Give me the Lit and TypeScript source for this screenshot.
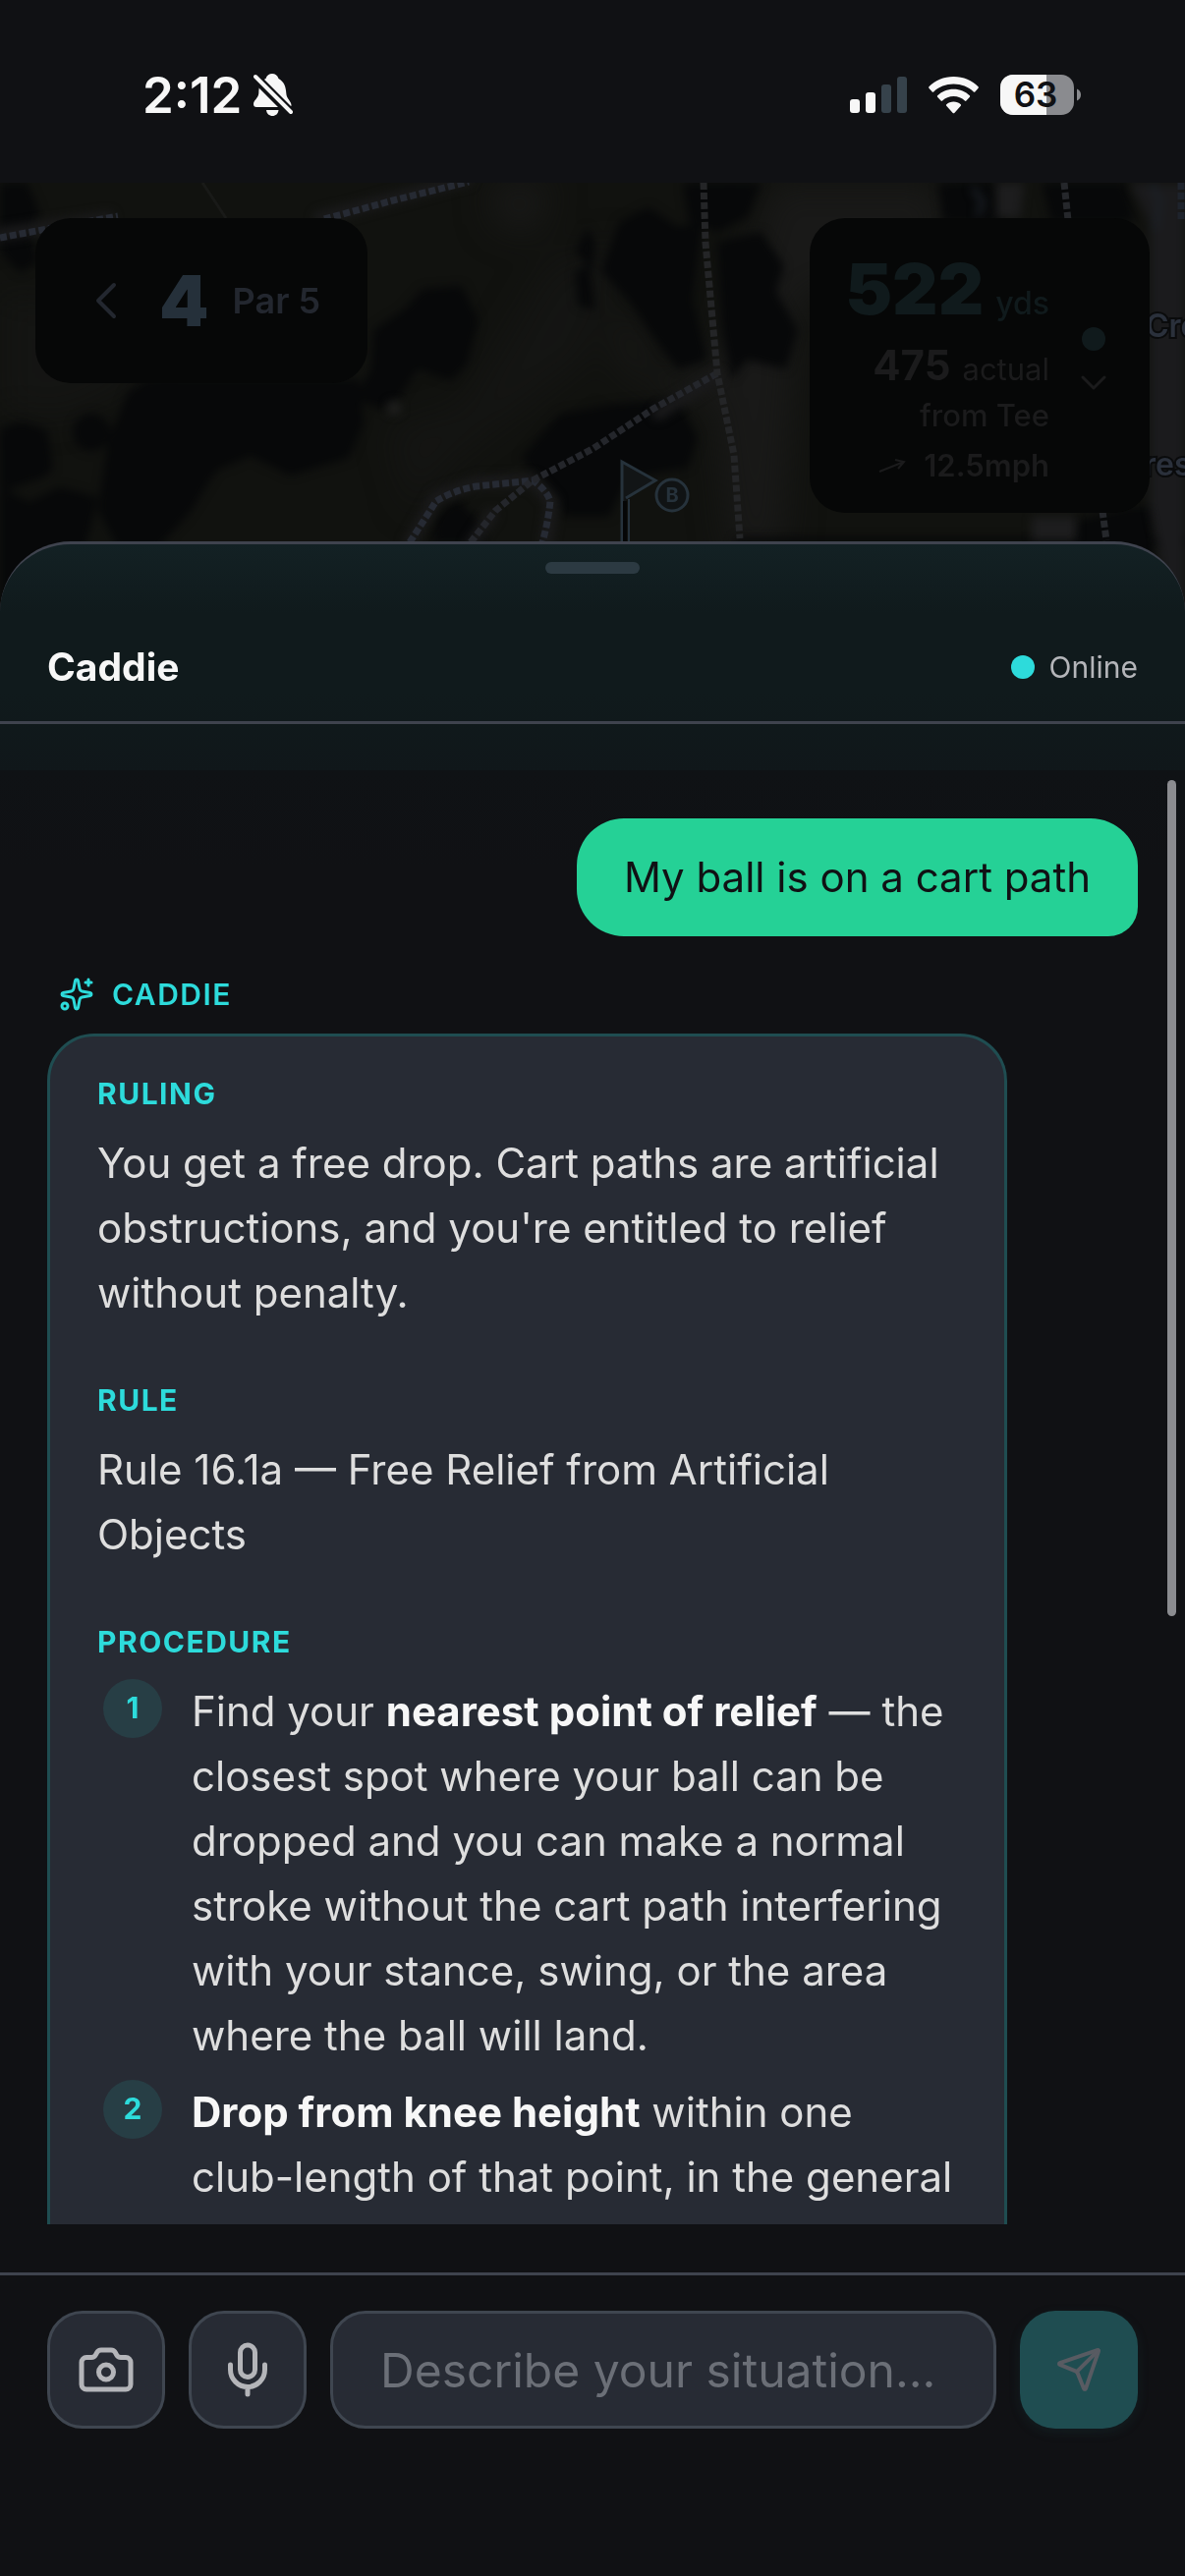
import { LitElement, html, css, svg, nothing } from "lit";
import { customElement, state } from "lit/decorators.js";

const sparkles = svg`
  <path d="M11.017 2.814a1 1 0 0 1 1.966 0l1.051 5.558a2 2 0 0 0 1.594 1.594l5.558 1.051a1 1 0 0 1 0 1.966l-5.558 1.051a2 2 0 0 0-1.594 1.594l-1.051 5.558a1 1 0 0 1-1.966 0l-1.051-5.558a2 2 0 0 0-1.594-1.594l-5.558-1.051a1 1 0 0 1 0-1.966l5.558-1.051a2 2 0 0 0 1.594-1.594z"/>
  <path d="M20 2v4M22 4h-4"/><circle cx="4" cy="20" r="2"/>`;
const camera = svg`
  <path d="M13.997 4a2 2 0 0 1 1.76 1.05l.486.9A2 2 0 0 0 18.003 7H20a2 2 0 0 1 2 2v9a2 2 0 0 1-2 2H4a2 2 0 0 1-2-2V9a2 2 0 0 1 2-2h1.997a2 2 0 0 0 1.759-1.048l.489-.904A2 2 0 0 1 10.004 4z"/>
  <circle cx="12" cy="13" r="3"/>`;
const mic = svg`<path d="M12 19v3M19 10v2a7 7 0 0 1-14 0v-2"/><rect x="9" y="2" width="6" height="13" rx="3"/>`;
const send = svg`
  <path d="M14.536 21.686a.5.5 0 0 0 .937-.024l6.5-19a.496.496 0 0 0-.635-.635l-19 6.5a.5.5 0 0 0-.024.937l7.93 3.18a2 2 0 0 1 1.112 1.11z"/>
  <path d="m21.854 2.147-10.94 10.939"/>`;

const icon = (shape: unknown, size: number) => html`
  <svg width=${size} height=${size} viewBox="0 0 24 24" fill="none" stroke="currentColor"
    stroke-width="2" stroke-linecap="round" stroke-linejoin="round" aria-hidden="true">${shape}</svg>`;

@customElement("phone-status")
class PhoneStatus extends LitElement {
  static styles = css`
    :host { display: flex; align-items: flex-start; justify-content: space-between; height: 186px; box-sizing: border-box;
      padding: 67px 106px 0 145px; background: #101114; color: #f7f7f7; }
    .left, .right { display: flex; align-items: center; height: 60px; }
    .left { gap: 12px; }
    .right { gap: 22px; }
    .time { font-size: 51px; line-height: 60px; font-weight: 600; }
    .battery { font-size: 35px; font-weight: 600; }
  `;
  render() {
    return html`
      <div class="left">
        <span class="time">2:12</span>
        <svg width="40" height="44" viewBox="0 0 40 44" aria-hidden="true">
          <path fill="#f7f7f7" d="M19 0c3 0 5.400 1.800 6.500 5C31 8 33 13 33.300 20c.3 5.500 5.200 8 5.200 12 0 1.500-1 2-2.500 2H3c-2 0-3-1-3-3 0-4 5-6 5.300-11C5.500 12 7 7.500 12.500 5 13.500 1.800 16 0 19 0z"/>
          <path fill="#f7f7f7" d="M13 37h12.500c-.3 3.800-3 6-6.200 6s-6-2.200-6.300-6z"/>
          <path stroke="#101114" stroke-width="10" d="M0 2 L40 42"/>
          <path stroke="#f7f7f7" stroke-width="4" stroke-linecap="round" d="M2 3 L38 39"/>
        </svg>
      </div>
      <div class="right">
        <svg width="58" height="38" viewBox="0 0 58 38" aria-hidden="true">
          <g fill="#f7f7f7"><rect y="23" width="10" height="14" rx="3"/><rect x="16" y="16" width="10" height="21" rx="3"/></g>
          <g fill="#36424b"><rect x="32" y="8" width="10" height="29" rx="3"/><rect x="48" y="0" width="10" height="37" rx="3"/></g>
        </svg>
        <svg width="51" height="38" viewBox="0 0 51 38" fill="#f7f7f7" aria-hidden="true">
          <path d="M25.500 0C35.500 0 44.500 4 50.600 10.200c.4.500.4 1 0 1.500l-3.300 3.700c-.5.500-1 .5-1.500 0C40.500 10.400 33.400 7.600 25.500 7.600S10.500 10.400 5.200 15.400c-.5.500-1 .5-1.500 0L.4 11.700c-.4-.5-.4-1 0-1.500C6.500 4 15.500 0 25.500 0z"/>
          <path d="M25.500 12.700c6.400 0 12.200 2.500 16.400 6.600.4.400.4 1 0 1.400l-3.500 3.900c-.5.500-1 .5-1.500 0-3-2.800-7-4.500-11.400-4.500s-8.400 1.700-11.400 4.500c-.5.500-1 .5-1.500 0l-3.500-3.900c-.4-.4-.4-1 0-1.400 4.200-4.100 10-6.600 16.400-6.600z"/>
          <path d="M25.500 25.500c2.800 0 5.300 1 7.200 2.700.5.400.5 1 .1 1.500l-6.500 7.200c-.5.500-1.100.5-1.600 0l-6.500-7.200c-.4-.5-.4-1.100.1-1.500 1.900-1.700 4.400-2.700 7.200-2.700z"/>
        </svg>
        <svg class="battery" width="82" height="42" viewBox="0 0 82 42" role="img" aria-label="Battery 63">
          <defs><clipPath id="cell"><rect width="75" height="41" rx="13"/></clipPath></defs>
          <g clip-path="url(#cell)"><rect width="75" height="41" fill="#8a8b8f"/><rect width="47" height="41" fill="#f7f7f7"/></g>
          <path d="M78 14.500c2.500 1 4 3.200 4 6s-1.500 5-4 6z" fill="#8a8b8f"/>
          <text x="36" y="33" text-anchor="middle" fill="#101114">63</text>
        </svg>
      </div>`;
  }
}

@customElement("course-map")
class CourseMap extends LitElement {
  static styles = css`
    :host { display: block; position: relative; height: 437px; background: #11120f; }
    .terrain { position: absolute; inset: 0; width: 100%; height: 100%; }
    .cards { position: relative; display: flex; justify-content: space-between; align-items: flex-start; padding: 36px; }
    .card { background: #060707; border-radius: 36px; box-sizing: border-box; }
    .hole { display: flex; align-items: center; height: 168px; width: 338px; padding-left: 60px; }
    .back { border: 0; padding: 0; background: none; color: #23272f; display: flex; width: 48px; }
    .number { font-size: 72px; line-height: 72px; font-weight: 900; color: #25303a; margin: 0 24px 0 18px; }
    .par { font-size: 36px; line-height: 48px; font-weight: 600; color: #23272f; }
    .yardage { display: flex; align-items: flex-start; gap: 33px; height: 300px; padding: 36px 45px 24px 36px; color: #1b1b1c; }
    .lines { display: flex; flex-direction: column; align-items: flex-end; font-size: 31px; line-height: 42px; font-weight: 500; }
    .plays { display: flex; align-items: baseline; gap: 12px; color: #101a1c; font-size: 32px; line-height: 36px; margin-bottom: 12px; }
    .plays strong { font-size: 72px; line-height: 72px; font-weight: 900; }
    .actual { display: flex; align-items: baseline; gap: 12px; font-weight: 400; }
    .actual strong { font-size: 42px; line-height: 60px; font-weight: 700; }
    .wind { display: flex; align-items: center; gap: 18px; margin-top: 9px; font-weight: 600; }
    .side { display: flex; flex-direction: column; align-items: center; gap: 25px; width: 24px; padding-top: 75px; }
    .dot { width: 24px; height: 24px; border-radius: 50%; background: #101a1c; }
    .label { font-size: 32px; font-weight: 600; fill: #2a303b; stroke: #0a0b0c; stroke-width: 4px; paint-order: stroke; }
    .tee { font-size: 20px; font-weight: 700; fill: #26323b; }
  `;
  render() {
    return html`
      <svg class="terrain" viewBox="0 0 1206 437" preserveAspectRatio="xMidYMin slice" aria-hidden="true">
        <defs>
          <filter id="soft" x="-10%" y="-10%" width="120%" height="120%" color-interpolation-filters="sRGB"><feGaussianBlur stdDeviation="5"/></filter>
          <filter id="wide" x="-20%" y="-20%" width="140%" height="140%" color-interpolation-filters="sRGB"><feGaussianBlur stdDeviation="18"/></filter>
        </defs>
        <g filter="url(#wide)" fill="#191918">
          <path d="M395 250 420 340 450 290 600 180 640 60 560 80 470 230z" opacity=".4"/>
          <path d="M500 0h60l-15 50-40-8z"/><path d="M785 0h170l10 60-150 60-20 260h-50l-20-170z"/>
          <path d="M625 140l15 60 20 0-10-60zM660 200l70-20 30 40 20 140h-20l-20-140-60 0z"/>
          <path d="M0 110 60 120 150 200 60 240 0 230z" opacity=".4"/>
        </g>
        <g filter="url(#soft)" fill="#070809">
          <path d="M0 0h28l12 30-10 20 10 30-20 12L0 70z"/>
          <path d="M0 250 22 243 48 252 54 290 45 300 0 315z"/><circle cx="93" cy="254" r="19"/>
          <path d="M150 200h215l5 45-15 35-60 18-40-20-35 15-25 40-35 40-40 0-20-40 10-70 20-50z"/>
          <path d="M0 310 30 325 60 310 100 320 90 360 60 437H0z"/>
          <path d="M410 130 430 108 470 105 487 140 475 185 460 202 425 190 405 220 390 230 360 220 378 190 380 150z"/>
          <path d="M585 70 597 45 606 60 603 90z"/><path d="M585 90 600 84 606 130 588 125z"/>
          <path d="M530 280 570 235 625 225 690 220 710 260 700 290 640 300 620 340H575l-12-25-20-20z"/>
          <path d="M445 340l20-18 25 25 5 20h-55z"/>
          <path d="M630 40 660 25 690 45 715 40 705 120 720 180 690 190 660 150 640 120 612 90z"/>
          <path d="M695 0h80l-14 35-30 15-30-10z"/><path d="M730 60 775 50 798 85 790 110 812 150 800 190 760 180 745 200 735 150z"/>
          <path d="M955 0h60l5 40h-60zM1060 0h85l10 40h-85z"/><path d="M1150 330h24l-2 70-20 30h-110l0-30 50-10 0-45z"/>
          <path d="M750 361h456v8H745z"/>
        </g>
        <g filter="url(#soft)">
          <path d="M1150 0h56v437h-20l-6-60-10-50V40z" fill="#1b1b1d"/>
          <path d="M1014 0h28l-4 36h-24zM1050 340h45v24h-45z" fill="#1d1d1e"/>
          <circle cx="401" cy="229" r="7" fill="#20201f"/>
          <path d="M990 5l10 15-5 14M1172 0l8 18-4 30" stroke="#1c2128" stroke-width="5" fill="none"/>
        </g>
        <g fill="none" stroke="#1a1a1b" stroke-width="13" stroke-linecap="round" filter="url(#soft)">
          <path d="M0 52 110 36M325 36 475-4M670 235l60-38M417 366l27-46 42-15 56-2 20 22-6 40M500 338l-20 30"/>
        </g>
        <g fill="none" stroke="#262a33" stroke-width="7" stroke-dasharray="7 3">
          <path d="M0 56 48 47 120 34M330 37 400 18 477-1"/>
          <path d="M417 366 444 324Q462 313 485 309L542 303Q556 312 560 324 558 345 552 366"/>
          <path d="M479 366 504 334 542 303 603 271 665 230 730 194" stroke="#24262b"/>
          <path d="M716 0 718 61 730 194 747 277 753 362" stroke="#242527"/>
          <path d="M1083 0 1087 38M1122 334 1126 364" stroke="#25272b"/>
          <path d="M1202 0v40" stroke="#1e232c"/>
        </g>
        <path d="M206 0 230 36" stroke="#191a18" stroke-width="3"/>
        <g stroke="#26323b" stroke-width="2" fill="none">
          <path d="M633 437V284L667 303 637 321" fill="#121516" stroke-width="3"/><path d="M640 437V322" />
          <path d="M636 437V324" stroke="#050606" stroke-width="4"/>
          <circle cx="684" cy="318" r="16" stroke-width="3" fill="#101314"/>
        </g>
        <text class="tee" x="684" y="325" text-anchor="middle">B</text>
        <text class="label" x="1166" y="157">Cre</text>
        <text class="label" x="1164" y="298">res</text>
      </svg>
      <div class="cards">
        <div class="card hole">
          <button class="back" aria-label="Previous hole">
            <svg width="24" height="40" viewBox="0 0 24 40" fill="none" stroke="currentColor" stroke-width="4" stroke-linecap="round" stroke-linejoin="round"><path d="M20 4 4 20l16 16"/></svg>
          </button>
          <span class="number">4</span><span class="par">Par 5</span>
        </div>
        <div class="card yardage">
          <div class="lines">
            <div class="plays"><strong>522</strong><span>yds</span></div>
            <div class="actual"><strong>475</strong><span>actual</span></div>
            <div>from Tee</div>
            <div class="wind">
              <svg width="28" height="14" viewBox="0 0 28 14" fill="none" stroke="currentColor" stroke-width="2"><path d="M1 13 26 3M17 1l9 2-6 7"/></svg>
              <span>12.5mph</span>
            </div>
          </div>
          <div class="side">
            <span class="dot"></span>
            <svg width="26" height="16" viewBox="0 0 26 16" fill="none" stroke="#1b1b1c" stroke-width="3" stroke-linecap="round" stroke-linejoin="round"><path d="M2 2 13 13 24 2"/></svg>
          </div>
        </div>
      </div>`;
  }
}

interface Section { title: string; text?: string; steps?: unknown[] }

@customElement("caddie-answer")
class CaddieAnswer extends LitElement {
  static styles = css`
    :host { display: flex; flex-direction: column; gap: 54px; box-sizing: border-box; width: 88%; padding: 37px 48px 96px;
      border: 3px solid #1f4d51; border-radius: 48px; background: #272b34; color: #dedede; font-size: 42px; line-height: 66px; }
    .section { display: flex; flex-direction: column; gap: 17px; }
    .section + .section { margin-top: 1px; }
    h3 { margin: 0; color: #2ddbdb; font-size: 30px; line-height: 42px; font-weight: 700; letter-spacing: 0.05em; }
    p { margin: 0; }
    ol { margin: 0; padding: 0; list-style: none; display: flex; flex-direction: column; gap: 12px; }
    li { display: flex; align-items: flex-start; gap: 30px; padding-left: 6px; }
    .badge { flex: none; width: 60px; height: 60px; border-radius: 50%; background: #273e45; color: #2ddbdb;
      font-size: 30px; line-height: 58px; font-weight: 700; text-align: center; }
    strong { color: #f7f7f7; font-weight: 700; }
  `;
  private sections: Section[] = [
    { title: "RULING", text: "You get a free drop. Cart paths are artificial obstructions, and you're entitled to relief without penalty." },
    { title: "RULE", text: "Rule 16.1a — Free Relief from Artificial Objects" },
    { title: "PROCEDURE", steps: [
      html`Find your <strong>nearest point of relief</strong> — the closest spot where your ball can be dropped and you can make a normal stroke without the cart path interfering with your stance, swing, or the area where the ball will land.`,
      html`<strong>Drop from knee height</strong> within one club-length of that point, in the general`,
    ] },
  ];
  render() {
    return this.sections.map((s) => html`
      <section class="section">
        <h3>${s.title}</h3>
        ${s.text ? html`<p>${s.text}</p>` : nothing}
        ${s.steps ? html`<ol>${s.steps.map((step, i) => html`<li><span class="badge">${i + 1}</span><p>${step}</p></li>`)}</ol>` : nothing}
      </section>`);
  }
}

@customElement("caddie-composer")
class CaddieComposer extends LitElement {
  static styles = css`
    form { display: flex; gap: 24px; margin: 0; padding: 36px 48px 150px; border-top: 3px solid #3f434e; }
    button, input { box-sizing: border-box; height: 120px; border: 3px solid #3f4650; border-radius: 36px; background: #272b34; font-family: inherit; }
    button { flex: none; display: flex; align-items: center; justify-content: center; width: 120px; padding: 0; color: #b4b5b9; }
    input { flex: 1; min-width: 0; padding: 0 48px; font-size: 48px; color: #f7f7f7; outline: 0; }
    input::placeholder { color: #6b6f77; opacity: 1; }
    .send { border: 0; background: #1f4d51; color: #585b62; box-shadow: 0 4px 12px #1f4d5133; }
  `;
  @state() private draft = "";
  render() {
    return html`
      <form @submit=${(e: Event) => e.preventDefault()}>
        <button type="button" aria-label="Take a photo">${icon(camera, 60)}</button>
        <button type="button" aria-label="Dictate">${icon(mic, 60)}</button>
        <input type="text" aria-label="Describe your situation" placeholder="Describe your situation..."
          .value=${this.draft} @input=${(e: Event) => (this.draft = (e.target as HTMLInputElement).value)} />
        <button class="send" type="submit" aria-label="Send">${icon(send, 48)}</button>
      </form>`;
  }
}

@customElement("app-root")
class AppRoot extends LitElement {
  static styles = css`
    :host { display: flex; flex-direction: column; height: 100vh; overflow: hidden; background: #101114;
      font-family: Inter, "Liberation Sans", sans-serif; }
    phone-status, course-map { flex: none; }
    .sheet { position: relative; flex: 1; min-height: 0; margin-top: -72px; display: flex; flex-direction: column;
      border-top: 3px solid #3f434e; border-radius: 72px 72px 0 0;
      background: linear-gradient(#132124, #101a1c 70px, #101a1c 150px, #10171a 233px, #101114 234px); }
    .handle { align-self: center; width: 96px; height: 12px; margin-top: 18px; border-radius: 6px; background: #2c3a42; }
    header { display: flex; align-items: center; justify-content: space-between; padding: 66px 48px 27px; border-bottom: 3px solid #3f434e; }
    h1 { margin: 0; color: #f7f7f7; font-size: 39px; line-height: 57px; font-weight: 700; }
    .online { display: flex; align-items: center; gap: 15px; color: #b4b5b9; font-size: 30px; line-height: 42px; }
    .online::before { content: ""; width: 24px; height: 24px; border-radius: 50%; background: #2ddbdb; }
    .chat { position: relative; flex: 1; min-height: 0; display: flex; margin: 47px 0 49px; background: linear-gradient(#0f1215, #101114 100px); }
    .messages { flex: 1; overflow-y: auto; scrollbar-width: none; padding: 49px 48px 0; }
    .thumb { position: absolute; top: 10px; right: 9px; width: 9px; border-radius: 5px; background: #8b8c90; }
    .mine { width: fit-content; margin: 0 0 0 auto; padding: 30px 48px; border-radius: 48px 48px 30px 48px;
      background: #25d196; color: #101114; font-size: 42px; line-height: 60px; }
    .from { display: flex; align-items: center; gap: 18px; margin: 38px 0 19px 12px; color: #2ddbdb;
      font-size: 30px; line-height: 42px; font-weight: 600; letter-spacing: 0.05em; }
  `;
  render() {
    return html`
      <phone-status></phone-status>
      <course-map></course-map>
      <main class="sheet">
        <div class="handle"></div>
        <header><h1>Caddie</h1><span class="online">Online</span></header>
        <div class="chat">
          <div class="messages">
            <p class="mine">My ball is on a cart path</p>
            <div class="from">${icon(sparkles, 36)}<span>CADDIE</span></div>
            <caddie-answer></caddie-answer>
          </div>
          <div class="thumb" style="height: ${(851 / 1480) * 100}%"></div>
        </div>
        <caddie-composer></caddie-composer>
      </main>`;
  }
}
